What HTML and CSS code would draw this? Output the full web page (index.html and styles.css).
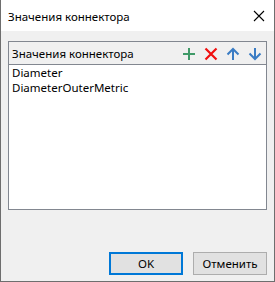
FILE: index.html
```html
<!DOCTYPE html>
<html>
<head>
<meta charset="utf-8">
<link rel="stylesheet" href="styles.css">
</head>
<body>
<div class="window">
  <div class="titlebar">
    <span class="title">Значения коннектора</span>
    <svg class="close" width="12" height="12" viewBox="0 0 12 12"><path d="M1 1 L11 11 M11 1 L1 11" stroke="#000" stroke-width="1.1" fill="none"/></svg>
  </div>
  <div class="content">
    <div class="panel">
      <div class="panel-head">
        <span class="panel-title">Значения коннектора</span>
        <div class="tools">
          <svg width="14" height="14" viewBox="0 0 14 14"><path d="M7 1 V13 M1 7 H13" stroke="#3f9a68" stroke-width="2" fill="none"/></svg>
          <svg width="14" height="14" viewBox="0 0 14 14"><path d="M1.5 1.5 L12.5 12.5 M12.5 1.5 L1.5 12.5" stroke="#f01010" stroke-width="2.2" fill="none"/></svg>
          <svg width="14" height="14" viewBox="0 0 14 14"><path d="M7 2 V13 M1.5 7.5 L7 2 L12.5 7.5" stroke="#3a7cc4" stroke-width="2" fill="none"/></svg>
          <svg width="14" height="14" viewBox="0 0 14 14"><path d="M7 1 V12 M1.5 6.5 L7 12 L12.5 6.5" stroke="#3a7cc4" stroke-width="2" fill="none"/></svg>
        </div>
      </div>
      <div class="list">
        <div class="item">Diameter</div>
        <div class="item">DiameterOuterMetric</div>
      </div>
    </div>
    <div class="buttons">
      <button class="btn btn-default">OK</button>
      <button class="btn">Отменить</button>
    </div>
  </div>
</div>
</body>
</html>
```
FILE: styles.css
```css
html, body {
  margin: 0;
  padding: 0;
  background: #f0f0f0;
}
body {
  font-family: "Noto Sans", "Liberation Sans", sans-serif;
  font-size: 11.5px;
  color: #000;
}
.window {
  box-sizing: border-box;
  width: 275px;
  height: 282px;
  border: 1px solid #6e6e6e;
  border-top: none;
  display: flex;
  flex-direction: column;
}
.titlebar {
  height: 31px;
  background: #fff;
  display: flex;
  align-items: center;
  justify-content: space-between;
  padding: 0 9px 0 7px;
  flex-shrink: 0;
}
.title {
  line-height: 15px;
  margin-top: 1px;
}
.close {
  display: block;
}
.content {
  flex: 1;
  display: flex;
  flex-direction: column;
  padding: 10px 7px 6px 7px;
  background: #f0f0f0;
}
.panel {
  height: 169px;
  box-sizing: border-box;
  border: 1px solid #828790;
  display: flex;
  flex-direction: column;
}
.panel-head {
  height: 22px;
  border-bottom: 1px solid #828790;
  display: flex;
  align-items: center;
  justify-content: space-between;
  padding: 0 4px 0 3px;
  flex-shrink: 0;
}
.panel-title {
  line-height: 15px;
  margin-top: 1px;
}
.tools {
  display: flex;
  gap: 8px;
  align-items: center;
  margin-top: 2px;
}
.tools svg {
  display: block;
}
.list {
  flex: 1;
  background: #fff;
  padding: 0 3px;
}
.item {
  line-height: 15px;
  height: 14.5px;
}
.buttons {
  margin-top: auto;
  display: flex;
  justify-content: flex-end;
  gap: 10px;
}
.btn {
  box-sizing: border-box;
  width: 74px;
  height: 23px;
  background: #e1e1e1;
  border: 1px solid #adadad;
  font-family: "Noto Sans", "Liberation Sans", sans-serif;
  font-size: 11.5px;
  color: #000;
  padding: 0;
  margin: 0;
}
.btn-default {
  border: 2px solid #0078d7;
}
```
